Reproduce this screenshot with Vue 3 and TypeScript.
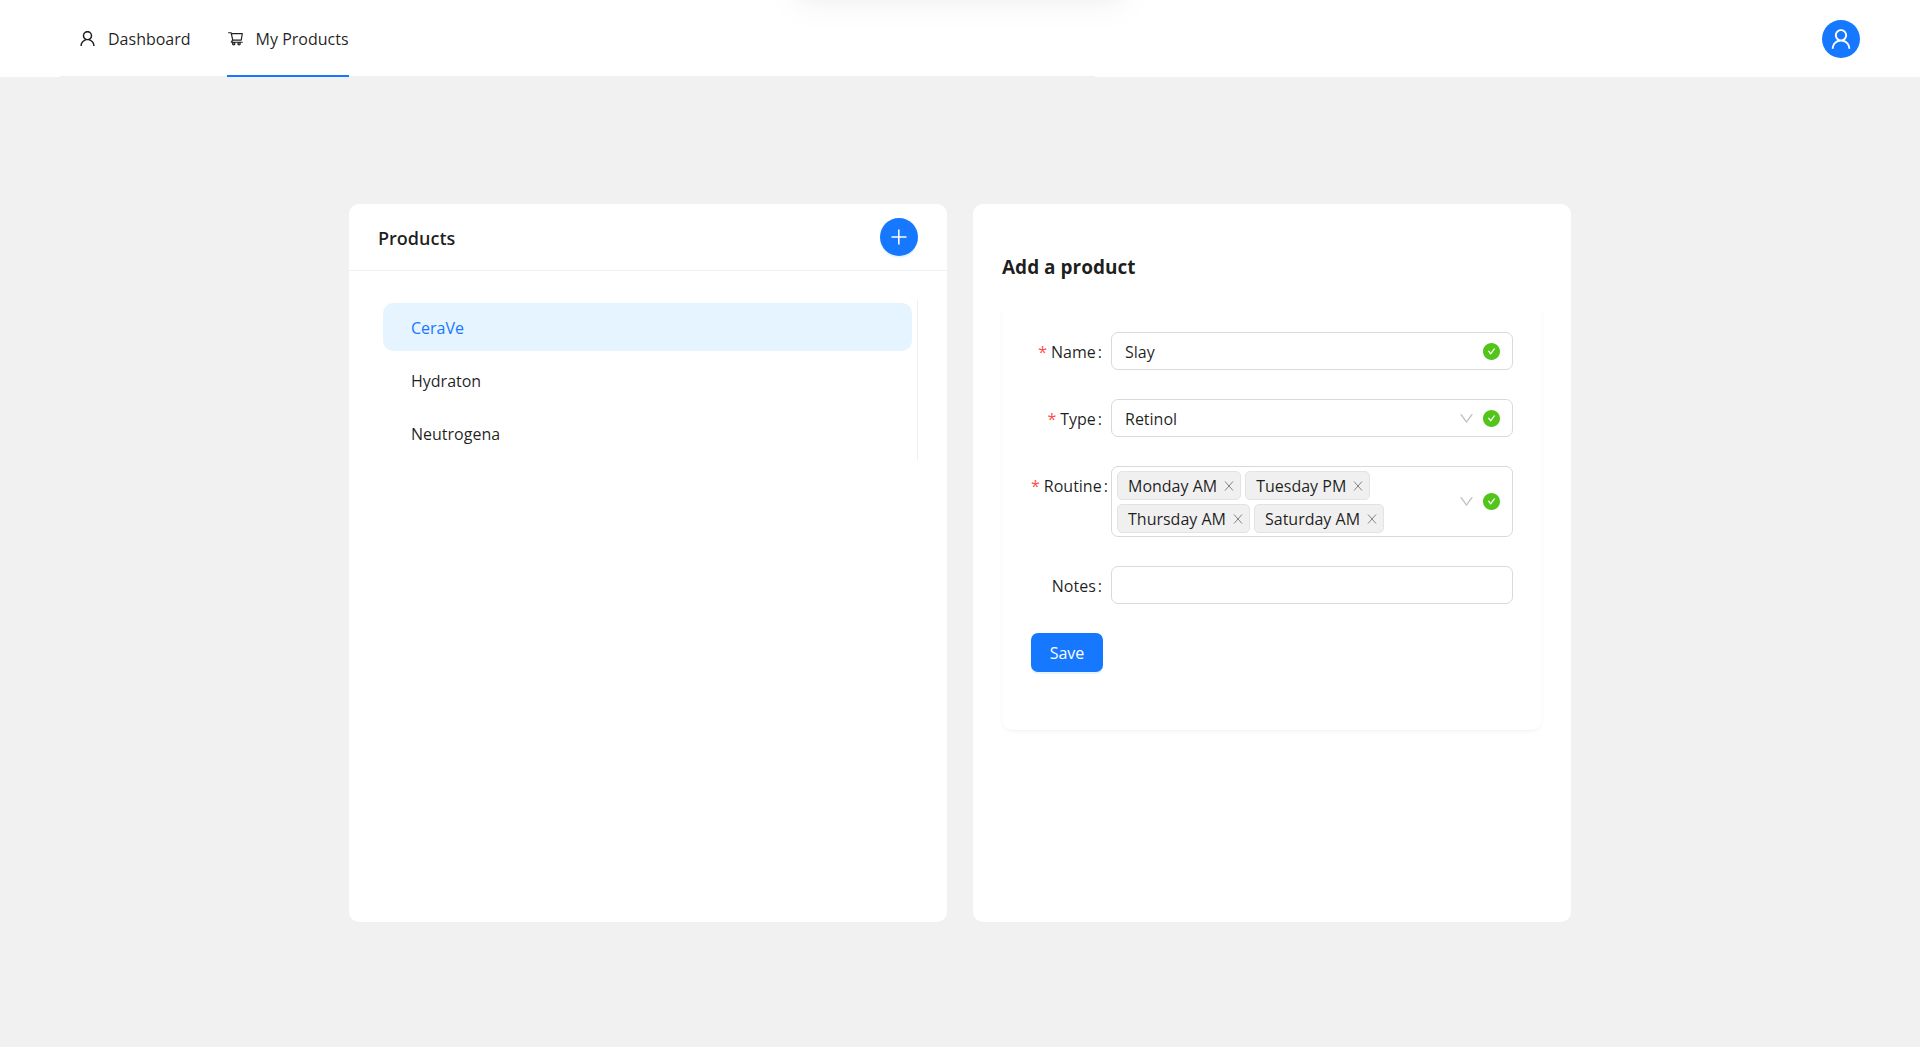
<script setup lang="ts">
import { ref } from 'vue'

interface Icon {
  box: string
  path: string
}

const icons: Record<string, Icon> = {
  user: {
    box: '64 64 896 896',
    path: 'M858.5 763.6a374 374 0 00-80.6-119.5 375.63 375.63 0 00-119.5-80.6c-.4-.2-.8-.3-1.2-.5C719.5 518 760 444.7 760 362c0-137-111-248-248-248S264 225 264 362c0 82.7 40.5 156 102.8 201.1-.4.2-.8.3-1.2.5-44.8 18.9-85 46-119.5 80.6a375.63 375.63 0 00-80.6 119.5A371.7 371.7 0 00136 901.8a8 8 0 008 8.2h60c4.4 0 7.9-3.5 8-7.8 2-77.2 33-149.5 87.8-204.3 56.7-56.7 132-87.9 212.2-87.9s155.5 31.2 212.2 87.9C779 752.7 810 825 812 902.2c.1 4.4 3.6 7.8 8 7.8h60a8 8 0 008-8.2c-1-47.8-10.9-94.3-29.5-138.2zM512 534c-45.9 0-89.1-17.9-121.6-50.4S340 407.9 340 362c0-45.9 17.9-89.1 50.4-121.6S466.1 190 512 190s89.1 17.9 121.6 50.4S684 316.1 684 362c0 45.9-17.9 89.1-50.4 121.6S557.9 534 512 534z',
  },
  cart: {
    box: '0 0 1024 1024',
    path: 'M922.9 701.9H327.4l29.9-60.9 496.8-.9c16.8 0 31.2-12 34.2-28.6l68.8-385.1c1.8-10.1-.9-20.5-7.5-28.4a34.99 34.99 0 00-26.6-12.5l-632-2.1-5.4-25.4c-3.4-16.2-18-28-34.6-28H96.5a35.3 35.3 0 100 70.6h125.9L246 312.8l58.1 281.3-74.8 122.1a34.96 34.96 0 00-3 36.8c6 11.9 18.1 19.4 31.5 19.4h62.8a102.43 102.43 0 00-20.6 61.7c0 56.6 46 102.6 102.6 102.6s102.6-46 102.6-102.6c0-22.3-7.4-44-20.6-61.7h161.1a102.43 102.43 0 00-20.6 61.7c0 56.6 46 102.6 102.6 102.6s102.6-46 102.6-102.6c0-22.3-7.4-44-20.6-61.7H923c19.4 0 35.3-15.8 35.3-35.3a35.42 35.42 0 00-35.4-35.2zM305.7 253l575.8 1.9-56.4 315.8-452.3.8L305.7 253zm96.9 612.7c-17.4 0-31.6-14.2-31.6-31.6 0-17.4 14.2-31.6 31.6-31.6s31.6 14.2 31.6 31.6a31.6 31.6 0 01-31.6 31.6zm325.1 0c-17.4 0-31.6-14.2-31.6-31.6 0-17.4 14.2-31.6 31.6-31.6s31.6 14.2 31.6 31.6a31.6 31.6 0 01-31.6 31.6z',
  },
  down: {
    box: '64 64 896 896',
    path: 'M884 256h-75c-5.1 0-9.9 2.5-12.9 6.6L512 654.2 227.9 262.6c-3-4.1-7.8-6.6-12.9-6.6h-75c-6.5 0-10.3 7.4-6.5 12.7l352.6 486.1c12.8 17.6 39 17.6 51.7 0l352.6-486.1c3.9-5.3.1-12.7-6.4-12.7z',
  },
  check: {
    box: '64 64 896 896',
    path: 'M512 64C264.6 64 64 264.6 64 512s200.6 448 448 448 448-200.6 448-448S759.4 64 512 64zm193.5 301.7l-210.6 292a31.8 31.8 0 01-51.7 0L318.5 484.9c-3.8-5.3 0-12.7 6.5-12.7h46.9c10.2 0 19.9 4.9 25.9 13.3l71.2 98.8 157.2-218c6-8.3 15.6-13.3 25.9-13.3H699c6.5 0 10.3 7.4 6.5 12.7z',
  },
}

const nav = [
  { label: 'Dashboard', icon: icons.user, active: false },
  { label: 'My Products', icon: icons.cart, active: true },
]

const products = ['CeraVe', 'Hydraton', 'Neutrogena']
const selected = ref('CeraVe')

const name = ref('Slay')
const type = ref('Retinol')
const notes = ref('')
const search = ref('')
const routine = ref(['Monday AM', 'Tuesday PM', 'Thursday AM', 'Saturday AM'])

function removeSlot(slot: string) {
  routine.value = routine.value.filter((s) => s !== slot)
}
</script>

<template>
  <div class="page">
    <header class="topbar">
      <nav class="nav">
        <a v-for="item in nav" :key="item.label" href="#" class="nav-item" :class="{ active: item.active }">
          <svg class="icon" :viewBox="item.icon.box" aria-hidden="true"><path :d="item.icon.path" /></svg>
          <span>{{ item.label }}</span>
        </a>
      </nav>
      <button type="button" class="round" aria-label="Account">
        <svg class="icon-lg" :viewBox="icons.user.box" aria-hidden="true"><path :d="icons.user.path" /></svg>
      </button>
    </header>

    <main class="columns">
      <section class="card">
        <div class="card-head">
          <h2 class="card-title">Products</h2>
          <button type="button" class="round raised" aria-label="Add product">
            <svg class="icon-lg" viewBox="0 0 22 22" aria-hidden="true">
              <path d="M10 3.5h1.6v15H10z M3.5 10.2h15v1.6h-15z" />
            </svg>
          </button>
        </div>
        <div class="card-body">
          <ul class="menu">
            <li v-for="p in products" :key="p">
              <button type="button" class="menu-item" :class="{ selected: p === selected }" @click="selected = p">
                {{ p }}
              </button>
            </li>
          </ul>
        </div>
      </section>

      <section class="card">
        <div class="card-body">
          <h3 class="form-title">Add a product</h3>
          <form class="form" @submit.prevent>
            <div class="row">
              <label class="label required" for="name">Name</label>
              <div class="control">
                <input id="name" v-model="name" type="text" class="field" />
                <span class="status">
                  <svg class="icon ok" :viewBox="icons.check.box" aria-hidden="true"><path :d="icons.check.path" /></svg>
                </span>
              </div>
            </div>

            <div class="row">
              <label class="label required" for="type">Type</label>
              <div class="control">
                <select id="type" v-model="type" class="field">
                  <option>Retinol</option>
                </select>
                <span class="status">
                  <svg class="arrow" :viewBox="icons.down.box" aria-hidden="true"><path :d="icons.down.path" /></svg>
                  <svg class="icon ok" :viewBox="icons.check.box" aria-hidden="true"><path :d="icons.check.path" /></svg>
                </span>
              </div>
            </div>

            <div class="row">
              <label class="label required" for="routine">Routine</label>
              <div class="control">
                <div class="field tags">
                  <span v-for="slot in routine" :key="slot" class="tag">
                    {{ slot }}
                    <button type="button" class="remove" :aria-label="'Remove ' + slot" @click="removeSlot(slot)">
                      <svg viewBox="0 0 10 10" aria-hidden="true"><path d="M1 0.5L9 9.5M9 0.5L1 9.5" /></svg>
                    </button>
                  </span>
                  <input id="routine" v-model="search" type="text" class="search" />
                </div>
                <span class="status">
                  <svg class="arrow" :viewBox="icons.down.box" aria-hidden="true"><path :d="icons.down.path" /></svg>
                  <svg class="icon ok" :viewBox="icons.check.box" aria-hidden="true"><path :d="icons.check.path" /></svg>
                </span>
              </div>
            </div>

            <div class="row">
              <label class="label" for="notes">Notes</label>
              <div class="control">
                <input id="notes" v-model="notes" type="text" class="field" />
              </div>
            </div>

            <button type="submit" class="save">Save</button>
          </form>
        </div>
      </section>
    </main>
  </div>
</template>

<style>
body {
  background: #f1f1f1;
}
</style>

<style scoped>
.page {
  min-height: 100vh;
  color: rgba(0, 0, 0, 0.88);
  font: 16px/26px 'Segoe UI', 'Open Sans', 'Noto Sans', sans-serif;
}

.page *,
.page *::before,
.page *::after {
  box-sizing: border-box;
}

button,
input,
select {
  margin: 0;
  padding: 0;
  border: 0;
  background: none;
  color: inherit;
  font: inherit;
  outline: none;
}

button {
  cursor: pointer;
}

svg {
  display: block;
  flex: none;
  fill: currentColor;
}

.icon {
  width: 17px;
  height: 17px;
}

.icon-lg {
  width: 22px;
  height: 22px;
}

/* Top bar */
.topbar {
  position: relative;
  display: flex;
  align-items: center;
  justify-content: space-between;
  height: 77px;
  padding: 0 60px;
  overflow: hidden;
  background: #fff;
}

.topbar::before {
  content: '';
  position: absolute;
  bottom: 100%;
  left: 50%;
  width: 320px;
  height: 40px;
  margin: 0 0 16px -160px;
  border-radius: 10px;
  box-shadow: 0 7px 19px rgba(0, 0, 0, 0.08), 0 11px 34px 10px rgba(0, 0, 0, 0.05);
}

.nav {
  display: flex;
  align-self: stretch;
  gap: 36px;
  width: 1035px;
  padding: 0 19px;
  border-bottom: 1px solid #f0f0f0;
}

.nav-item {
  display: flex;
  align-items: center;
  gap: 12px;
  margin-bottom: -1px;
  padding-top: 2px;
  border-bottom: 2px solid transparent;
  color: inherit;
  text-decoration: none;
  white-space: nowrap;
}

.nav-item.active {
  border-bottom-color: #1677ff;
}

.round {
  display: flex;
  align-items: center;
  justify-content: center;
  width: 38px;
  height: 38px;
  border-radius: 50%;
  background: #1677ff;
  color: #fff;
}

.raised {
  box-shadow: 0 2px 0 rgba(5, 145, 255, 0.1);
}

/* Cards */
.columns {
  display: grid;
  grid-template-columns: repeat(2, minmax(0, 1fr));
  gap: 26px;
  max-width: 1222px;
  margin: 0 auto;
  padding: 127px 0;
}

.card {
  min-height: 718px;
  border-radius: 10px;
  background: #fff;
}

.card-head {
  display: flex;
  align-items: center;
  justify-content: space-between;
  height: 67px;
  padding: 0 29px;
  border-bottom: 1px solid #f0f0f0;
}

.card-title {
  margin: 0;
  padding-top: 2px;
  font-size: 18px;
  font-weight: 600;
}

.card-body {
  padding: 28px 29px;
}

/* Product menu */
.menu {
  display: flex;
  flex-direction: column;
  gap: 5px;
  margin: 0;
  padding: 4px 5px;
  border-right: 1px solid #f0f0f0;
  list-style: none;
}

.menu-item {
  display: block;
  width: 100%;
  height: 48px;
  padding: 2px 28px 0;
  border-radius: 10px;
  text-align: left;
}

.menu-item.selected {
  background: #e6f4ff;
  color: #1677ff;
}

/* Form */
.form-title {
  margin: 20px 0;
  font-size: 19px;
  font-weight: 700;
  line-height: 31px;
}

.form {
  display: flex;
  flex-direction: column;
  align-items: flex-start;
  gap: 29px;
  padding: 29px 29px 58px;
  border-radius: 10px;
  box-shadow: 0 1px 2px rgba(0, 0, 0, 0.03), 0 1px 7px -1px rgba(0, 0, 0, 0.02), 0 2px 5px rgba(0, 0, 0, 0.02);
}

.row {
  display: flex;
  align-self: stretch;
}

.label {
  display: flex;
  flex: none;
  align-items: center;
  justify-content: flex-end;
  width: 80px;
  height: 38px;
  padding-top: 2px;
  white-space: nowrap;
}

.label::after {
  content: ':';
  margin: 0 9px 0 2px;
}

.required {
  justify-content: safe flex-end;
}

.required::before {
  content: '*';
  margin-right: 4px;
  color: #ff4d4f;
}

.control {
  position: relative;
  flex: 1;
  min-width: 0;
}

.field {
  display: block;
  width: 100%;
  height: 38px;
  padding: 2px 13px 0;
  border: 1px solid #d9d9d9;
  border-radius: 7px;
  background: #fff;
  appearance: none;
}

.status {
  position: absolute;
  inset: 0 13px 0 auto;
  display: flex;
  align-items: center;
  gap: 9px;
  pointer-events: none;
}

.ok {
  color: #52c41a;
}

.arrow {
  width: 15px;
  height: 15px;
  color: rgba(0, 0, 0, 0.25);
}

.tags {
  display: flex;
  flex-wrap: wrap;
  gap: 4px;
  height: auto;
  min-height: 38px;
  padding: 4px 60px 3px 5px;
}

.tag {
  display: flex;
  align-items: center;
  gap: 7px;
  height: 29px;
  padding: 0 6px 0 10px;
  border: 1px solid #e3e3e3;
  border-radius: 5px;
  background: #f0f0f0;
  white-space: nowrap;
}

.remove svg {
  width: 10px;
  height: 10px;
  fill: none;
  stroke: rgba(0, 0, 0, 0.45);
}

.search {
  flex: 1;
  width: 4px;
  min-width: 4px;
}

.save {
  min-width: 72px;
  height: 39px;
  padding: 0 18px;
  border-radius: 7px;
  background: #1677ff;
  box-shadow: 0 2px 0 rgba(5, 145, 255, 0.1);
  color: #fff;
}
</style>
